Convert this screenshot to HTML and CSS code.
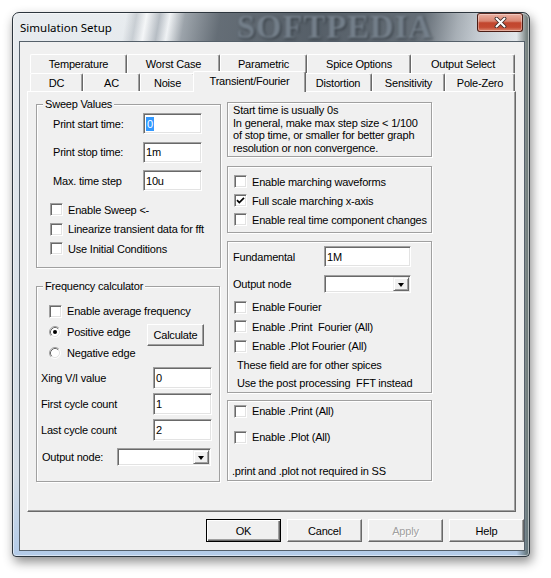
FILE: index.html
```html
<!DOCTYPE html>
<html>
<head>
<meta charset="utf-8">
<title>Simulation Setup</title>
<link rel="stylesheet" href="styles.css">
</head>
<body>
<div class="window">
  <div class="titlebar">
    <span class="title">Simulation Setup</span>
    <span class="brand">SOFTPEDIA</span>
    <span class="close"><svg width="13" height="11" viewBox="0 0 13 11"><path d="M2.5 1.5 L10.5 9.5 M10.5 1.5 L2.5 9.5" stroke="#3a2a28" stroke-width="3.8" stroke-linecap="round"/><path d="M2.5 1.5 L10.5 9.5 M10.5 1.5 L2.5 9.5" stroke="#fff" stroke-width="2.1" stroke-linecap="round"/></svg></span>
  </div>
  <div class="client">
    <div class="tabctl">
      <div class="tabrow back">
        <div class="tab t97">Temperature</div>
        <div class="tab t93">Worst Case</div>
        <div class="tab t87">Parametric</div>
        <div class="tab t104">Spice Options</div>
        <div class="tab t104">Output Select</div>
      </div>
      <div class="tabrow front">
        <div class="tab t53">DC</div>
        <div class="tab t57">AC</div>
        <div class="tab t55">Noise</div>
        <div class="tab t109 active">Transient/Fourier</div>
        <div class="tab t68">Distortion</div>
        <div class="tab t73">Sensitivity</div>
        <div class="tab t70">Pole-Zero</div>
      </div>
      <div class="panel">
        <div class="col-left">
          <fieldset class="group sweep">
            <legend>Sweep Values</legend>
            <div class="sweep-fields">
              <span class="lbl">Print start time:</span><div class="edit"><span class="sel">0</span></div>
              <span class="lbl">Print stop time:</span><div class="edit">1m</div>
              <span class="lbl">Max. time step</span><div class="edit">10u</div>
            </div>
            <div class="sweep-checks">
              <div class="check"><span class="cb"></span>Enable Sweep &lt;-</div>
              <div class="check"><span class="cb"></span>Linearize transient data for fft</div>
              <div class="check"><span class="cb"></span>Use Initial Conditions</div>
            </div>
          </fieldset>
          <fieldset class="group freq">
            <legend>Frequency calculator</legend>
            <div class="check avg"><span class="cb"></span>Enable average frequency</div>
            <div class="edge-row">
              <div class="radios">
                <div class="radio-row"><svg class="rb" width="12" height="12" viewBox="0 0 12 12"><circle cx="6" cy="6" r="5" fill="#fff"/><path d="M2.11 9.89 A5.5 5.5 0 0 1 9.89 2.11" fill="none" stroke="#a0a0a0"/><path d="M9.89 2.11 A5.5 5.5 0 0 1 2.11 9.89" fill="none" stroke="#fff"/><path d="M2.82 9.18 A4.5 4.5 0 0 1 9.18 2.82" fill="none" stroke="#696969"/><path d="M9.18 2.82 A4.5 4.5 0 0 1 2.82 9.18" fill="none" stroke="#e3e3e3"/><circle cx="6" cy="6" r="2" fill="#000"/></svg>Positive edge</div>
                <div class="radio-row"><svg class="rb" width="12" height="12" viewBox="0 0 12 12"><circle cx="6" cy="6" r="5" fill="#fff"/><path d="M2.11 9.89 A5.5 5.5 0 0 1 9.89 2.11" fill="none" stroke="#a0a0a0"/><path d="M9.89 2.11 A5.5 5.5 0 0 1 2.11 9.89" fill="none" stroke="#fff"/><path d="M2.82 9.18 A4.5 4.5 0 0 1 9.18 2.82" fill="none" stroke="#696969"/><path d="M9.18 2.82 A4.5 4.5 0 0 1 2.82 9.18" fill="none" stroke="#e3e3e3"/></svg>Negative edge</div>
              </div>
              <div class="btn calc">Calculate</div>
            </div>
            <div class="freq-fields">
              <span class="lbl">Xing V/I value</span><div class="edit">0</div>
              <span class="lbl">First cycle count</span><div class="edit">1</div>
              <span class="lbl">Last cycle count</span><div class="edit">2</div>
            </div>
            <div class="node-row">
              <span class="lbl node-lbl">Output node:</span>
              <div class="combo left-combo"><span class="arrow"><span class="tri"></span></span></div>
            </div>
          </fieldset>
        </div>
        <div class="col-right">
          <div class="box info">
            <div>Start time is usually 0s</div>
            <div>In general, make max step size &lt; 1/100</div>
            <div>of stop time, or smaller for better graph</div>
            <div>resolution or non convergence.</div>
          </div>
          <div class="box march">
            <div class="check r19"><span class="cb"></span>Enable marching waveforms</div>
            <div class="check r19"><span class="cb"><svg width="9" height="9" viewBox="0 0 9 9"><path d="M1 4.2 L3.3 6.6 L8 1.8" fill="none" stroke="#000" stroke-width="1.7"/></svg></span>Full scale marching x-axis</div>
            <div class="check r19"><span class="cb"></span>Enable real time component changes</div>
          </div>
          <div class="box fourier">
            <div class="four-row"><span class="lbl">Fundamental</span><div class="edit">1M</div></div>
            <div class="four-row node"><span class="lbl">Output node</span><div class="combo right-combo"><span class="arrow"><span class="tri"></span></span></div></div>
            <div class="four-checks">
              <div class="check r195"><span class="cb"></span>Enable Fourier</div>
              <div class="check r195"><span class="cb"></span>Enable .Print&nbsp; Fourier (All)</div>
              <div class="check r195"><span class="cb"></span>Enable .Plot Fourier (All)</div>
            </div>
            <div class="note">These field are for other spices</div>
            <div class="note">Use the post processing&nbsp; FFT instead</div>
          </div>
          <div class="box prints">
            <div class="check r20"><span class="cb"></span>Enable .Print (All)</div>
            <div class="check r20 second"><span class="cb"></span>Enable .Plot (All)</div>
            <div class="ss-note">.print and .plot not required in SS</div>
          </div>
        </div>
      </div>
    </div>
    <div class="buttons">
      <div class="btn dlg default">OK</div>
      <div class="btn dlg">Cancel</div>
      <div class="btn dlg disabled">Apply</div>
      <div class="btn dlg">Help</div>
    </div>
  </div>
</div>
</body>
</html>
```
FILE: styles.css
```css
* { box-sizing: border-box; }
html, body { margin: 0; padding: 0; }
body {
  width: 551px;
  height: 578px;
  overflow: hidden;
  background: #ffffff;
  font-family: "Liberation Sans", Arial, sans-serif;
  font-size: 11px;
  letter-spacing: -0.2px;
  color: #000;
}

/* ---------- window frame ---------- */
.window {
  margin: 12px 0 0 12px;
  width: 518px;
  height: 545px;
  border: 1px solid #2c353d;
  border-radius: 7px 7px 4px 4px;
  display: flex;
  flex-direction: column;
  background:
    linear-gradient(90deg, rgba(0,0,0,0) 97.6%, rgba(70,84,80,.7) 99.6%),
    linear-gradient(180deg, #e8ecef 0%, #dfe5eb 30%, #d4dde6 85%, #b3cbe8 100%);
  box-shadow: 2px 5px 11px rgba(0,0,0,.45), inset 0 0 0 1px rgba(255,255,255,.5);
}

.titlebar {
  height: 28px;
  flex: none;
  display: flex;
  align-items: center;
  padding-left: 7px;
  padding-right: 6px;
  border-radius: 6px 6px 0 0;
  background:
    linear-gradient(100deg,
      rgba(0,0,0,0) 0, rgba(0,0,0,0) 112px,
      rgba(120,130,140,.28) 122px, rgba(255,255,255,.55) 132px,
      rgba(110,120,132,.4) 145px, rgba(255,255,255,.35) 155px,
      rgba(95,105,115,.55) 170px, rgba(68,78,88,.8) 205px,
      rgba(60,70,80,.85) 300px, rgba(72,82,92,.82) 405px,
      rgba(115,125,135,.55) 440px, rgba(150,160,170,.42) 462px,
      rgba(0,0,0,0) 505px);
}
.title {
  font-family: "Noto Sans", "Open Sans", sans-serif;
  font-size: 11.5px;
  letter-spacing: 0;
  color: #000;
}
.brand {
  margin-left: auto;
  margin-right: 44px;
  font-family: "Liberation Serif", serif;
  font-weight: bold;
  font-size: 33px;
  line-height: 28px;
  height: 28px;
  letter-spacing: 0.8px;
  color: rgba(128,140,152,.85);
  filter: blur(0.9px);
  text-shadow: 1px 1px 2px rgba(20,25,30,.7);
}
.close {
  align-self: flex-start;
  width: 46px;
  height: 19px;
  border: 1px solid #4a1c14;
  border-top-color: #5a2a22;
  border-radius: 3px;
  display: flex;
  align-items: center;
  justify-content: center;
  background: linear-gradient(180deg, #eab0a2 0%, #d98672 42%, #c2462e 52%, #c44a32 78%, #dc8a72 100%);
  box-shadow: inset 0 0 0 1px rgba(255,255,255,.35);
}

/* ---------- client area ---------- */
.client {
  flex: 1;
  margin: 0 4px 5px 6px;
  border: 1px solid #55606a;
  background: #f0f0f0;
  padding: 12px 0 0 7px;
}

.tabctl { width: 489px; }
.tabrow { display: flex; margin-left: 3px; }
.tabrow.back { height: 19px; }
.tabrow.front { height: 18px; }
.tab {
  flex: none;
  height: 100%;
  background: #f0f0f0;
  border-top: 1px solid #fff;
  border-left: 1px solid #fff;
  border-right: 1px solid #696969;
  box-shadow: inset -1px 0 #a0a0a0;
  border-radius: 2px 2px 0 0;
  display: flex;
  align-items: center;
  justify-content: center;
  white-space: nowrap;
}
.t53 { width: 53px; }
.t55 { width: 55px; }
.t57 { width: 57px; }
.t68 { width: 68px; }
.t70 { width: 70px; }
.t73 { width: 73px; }
.t87 { width: 87px; }
.t93 { width: 93px; }
.t97 { width: 97px; }
.t104 { width: 104px; }
.t109 { width: 109px; }
.tab.active {
  width: 113px;
  height: 21px;
  margin: -2px -2px -1px -2px;
  padding-bottom: 3px;
  position: relative;
  z-index: 2;
}

.panel {
  width: 489px;
  height: 421px;
  border: 1px solid;
  border-color: #fff #696969 #696969 #fff;
  box-shadow: inset -1px -1px #a0a0a0;
  display: flex;
  gap: 6px;
  padding: 6px 0 0 8px;
}

/* ---------- common controls ---------- */
fieldset.group {
  margin: 0;
  padding: 0;
  min-width: 0;
  border: 1px solid #a0a0a0;
  box-shadow: inset 1px 1px #fff, 1px 1px #fff;
}
fieldset.group legend {
  margin-left: 6px;
  padding: 0 2px;
  line-height: 13px;
  background: #f0f0f0;
}
.box {
  border: 1px solid #a0a0a0;
  box-shadow: inset 1px 1px #fff, 1px 1px #fff;
}
.lbl { white-space: pre; }
.edit {
  background: #fff;
  border: 1px solid;
  border-color: #a0a0a0 #fff #fff #a0a0a0;
  box-shadow: inset 1px 1px #696969, inset -1px -1px #e3e3e3;
  padding-left: 2px;
  display: flex;
  align-items: center;
  white-space: nowrap;
}
.sel {
  background: #3399ff;
  color: #fff;
  line-height: 14px;
  padding: 0 1px;
}
.check {
  display: flex;
  align-items: center;
  gap: 5px;
  white-space: pre;
}
.cb {
  flex: none;
  width: 13px;
  height: 13px;
  background: #fff;
  border: 1px solid;
  border-color: #a0a0a0 #fff #fff #a0a0a0;
  box-shadow: inset 1px 1px #696969, inset -1px -1px #e3e3e3;
  display: flex;
  align-items: center;
  justify-content: center;
}
.btn {
  background: #f0f0f0;
  border: 1px solid;
  border-color: #fff #696969 #696969 #fff;
  box-shadow: inset -1px -1px #a0a0a0;
  display: flex;
  align-items: center;
  justify-content: center;
}
.combo {
  background: #fff;
  border: 1px solid;
  border-color: #a0a0a0 #fff #fff #a0a0a0;
  box-shadow: inset 1px 1px #696969, inset -1px -1px #e3e3e3;
  display: flex;
  justify-content: flex-end;
  padding: 1px;
}
.arrow {
  width: 16px;
  height: 100%;
  background: #f0f0f0;
  border: 1px solid;
  border-color: #f0f0f0 #696969 #696969 #f0f0f0;
  box-shadow: inset 1px 1px #fff, inset -1px -1px #a0a0a0;
  display: flex;
  align-items: center;
  justify-content: center;
}
.tri {
  width: 0;
  height: 0;
  border-left: 3.5px solid transparent;
  border-right: 3.5px solid transparent;
  border-top: 4px solid #000;
  margin-top: 1px;
}

/* ---------- left column ---------- */
.col-left { width: 185px; display: flex; flex-direction: column; }
fieldset.sweep { height: 170px; width: 185px; }
.sweep-fields {
  margin: 2px 0 0 16px;
  display: grid;
  grid-template-columns: 90px 59px;
  grid-template-rows: 21px 21px 21px;
  row-gap: 7.5px;
  align-items: center;
}
.sweep-fields .edit { height: 21px; }
.sweep-checks { margin: 9px 0 0 13px; }
.sweep-checks .check { height: 19.5px; }

fieldset.freq { margin-top: 12px; height: 202px; width: 184px; }
.check.avg { height: 20px; margin: 8px 0 0 12px; }
.edge-row { display: flex; margin-left: 12px; }
.radios { width: 98px; }
.radio-row { height: 21px; display: flex; align-items: center; gap: 6px; }
.rb { flex: none; }
.btn.calc { width: 57px; height: 22px; margin-top: 3px; }
.freq-fields {
  margin: 4px 0 0 4px;
  display: grid;
  grid-template-columns: 112px 59px;
  grid-template-rows: 22px 22px 22px;
  row-gap: 4px;
  align-items: center;
}
.freq-fields .edit { height: 22px; }
.node-row { display: flex; align-items: center; margin: 7px 0 0 5px; }
.node-lbl { width: 75px; }
.left-combo { width: 94px; height: 18px; }

/* ---------- right column ---------- */
.col-right { width: 205px; padding-top: 4px; display: flex; flex-direction: column; }
.info { height: 55px; padding: 1px 0 0 5px; line-height: 12.7px; white-space: nowrap; }
.march { margin-top: 9px; height: 67px; padding: 5px 0 0 6px; }
.r19 { height: 19px; }
.fourier { margin-top: 8px; height: 152px; padding: 4px 0 0 5px; }
.four-row { display: grid; grid-template-columns: 91px 87px; align-items: center; height: 21px; }
.four-row .edit { height: 21px; }
.four-row.node { margin-top: 8px; height: 18px; }
.right-combo { width: 87px; height: 18px; }
.four-checks { margin: 4.5px 0 0 1px; }
.r195 { height: 19.5px; }
.note { height: 18px; line-height: 18px; margin-left: 4px; white-space: pre; }
.prints { margin-top: 7px; height: 81px; padding: 0 0 0 6px; }
.r20 { height: 20px; }
.check.second { margin-top: 6px; }
.ss-note { margin: 15px 0 0 -2px; height: 18px; line-height: 18px; white-space: pre; }

/* ---------- dialog buttons ---------- */
.buttons { display: flex; gap: 6px; margin: 7px 0 0 179px; }
.btn.dlg { width: 75px; height: 23px; }
.btn.default {
  border: 1px solid #000;
  box-shadow: inset 1px 1px #fff, inset -1px -1px #696969, inset -2px -2px #a0a0a0;
}
.btn.disabled { color: #a0a0a0; text-shadow: 1px 1px #fff; }
```
